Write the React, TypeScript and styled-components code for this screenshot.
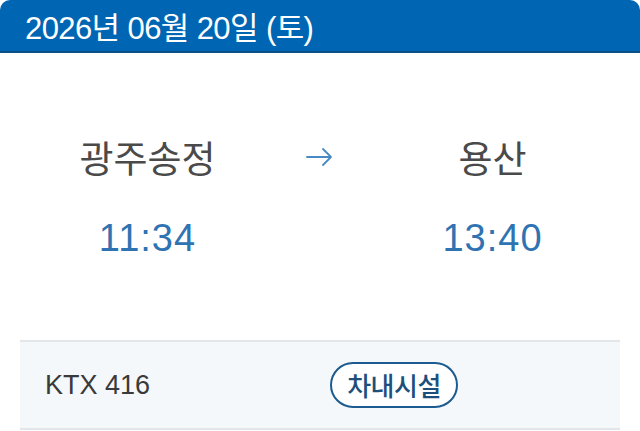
import React from 'react';
import styled, { createGlobalStyle } from 'styled-components';

const GlobalStyle = createGlobalStyle`
  html, body {
    margin: 0;
    padding: 0;
    background: #ffffff;
  }
  body {
    font-family: "Liberation Sans", "Noto Sans CJK KR", sans-serif;
  }
`;

// Layout
const Ticket = styled.div`
  width: 640px;
  height: 431px;
  background: #ffffff;
  overflow: hidden;
`;

const DateBar = styled.div`
  height: 51px;
  display: flex;
  align-items: center;
  padding-left: 25px;
  background: #0066b3;
  border-bottom: 2px solid #0b4f86;
  border-radius: 10px 10px 0 0;
  color: #ffffff;
  font-size: 31px;
  letter-spacing: -0.6px;
`;

const Route = styled.div`
  display: grid;
  grid-template-columns: 1fr 90px 1fr;
  padding: 84px 20px 0;
`;

const Stop = styled.div`
  display: flex;
  flex-direction: column;
  align-items: center;
`;

const StationName = styled.div`
  height: 40px;
  line-height: 40px;
  font-size: 37px;
  font-weight: 400;
  color: #4a4a4a;
  font-family: "Noto Sans CJK KR", sans-serif;
`;

const Time = styled.div`
  margin-top: 39px;
  height: 44px;
  line-height: 44px;
  font-size: 38px;
  color: #2f73b2;
  letter-spacing: 1px;
`;

const ArrowCell = styled.div`
  height: 40px;
  display: flex;
  align-items: center;
  justify-content: center;
  color: #4a8ac4;
`;

const TrainRow = styled.div`
  margin: 80px 20px 0;
  height: 86px;
  display: grid;
  grid-template-columns: 285px 1fr;
  align-items: center;
  padding-left: 25px;
  background: #f4f8fb;
  border-top: 2px solid #e3e6e9;
  border-bottom: 2px solid #e3e6e9;
`;

const TrainNo = styled.div`
  font-size: 27px;
  color: #3a3a3a;
`;

const FacilityButton = styled.button`
  justify-self: start;
  width: 128px;
  height: 46px;
  border: 2px solid #1b5b8f;
  border-radius: 23px;
  background: #ffffff;
  color: #1d4f7c;
  font-family: "Noto Sans CJK KR", sans-serif;
  font-size: 26px;
  font-weight: 500;
  letter-spacing: -0.5px;
  padding: 0 0 2px;
`;

const Arrow: React.FC = () => (
  <svg width="28" height="20" viewBox="0 0 28 20" fill="none">
    <path d="M1 10 H25 M17 2 L25 10 L17 18" stroke="currentColor" strokeWidth="1.8" strokeLinecap="round" strokeLinejoin="round" />
  </svg>
);

const App: React.FC = () => {
  return (
    <>
      <GlobalStyle />
      <Ticket>
        <DateBar>2026년 06월 20일 (토)</DateBar>
        <Route>
          <Stop>
            <StationName>광주송정</StationName>
            <Time>11:34</Time>
          </Stop>
          <ArrowCell>
            <Arrow />
          </ArrowCell>
          <Stop>
            <StationName>용산</StationName>
            <Time>13:40</Time>
          </Stop>
        </Route>
        <TrainRow>
          <TrainNo>KTX 416</TrainNo>
          <FacilityButton>차내시설</FacilityButton>
        </TrainRow>
      </Ticket>
    </>
  );
};

export default App;
